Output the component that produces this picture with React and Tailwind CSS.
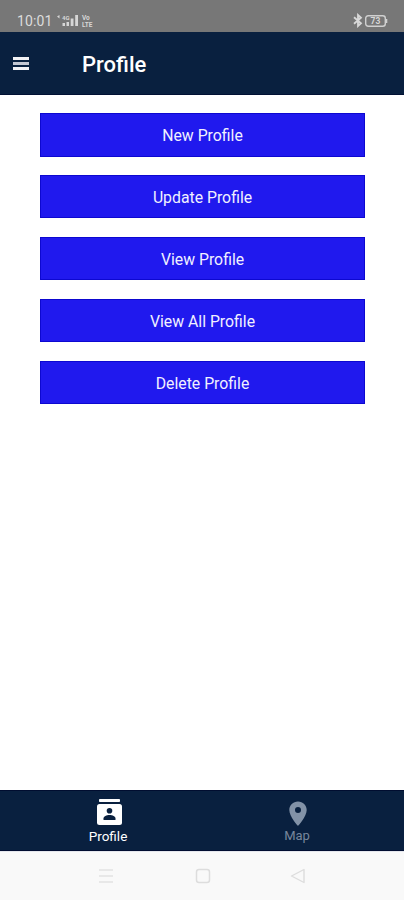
const actions = [
  "New Profile",
  "Update Profile",
  "View Profile",
  "View All Profile",
  "Delete Profile",
];

function SignalIcons() {
  return (
    <svg
      width="41"
      height="14"
      viewBox="0 0 41 14"
      className="ml-[4px]"
      fill="#d6d6d6"
      fontFamily="Roboto, sans-serif"
      fontWeight="700"
    >
      <path d="M0 2.5 2.500 1v3.500z" />
      <text x="5" y="5.500" fontSize="6">4G</text>
      <rect x="5.500" y="9" width="2.500" height="3" />
      <rect x="9.500" y="8" width="2.500" height="4" />
      <rect x="13.700" y="4.500" width="2.800" height="7.500" />
      <rect x="18.200" y="1" width="2.800" height="11" />
      <text x="25" y="6" fontSize="6.500">Vo</text>
      <text x="25" y="13" fontSize="6.500">LTE</text>
    </svg>
  );
}

function StatusBar() {
  return (
    <div className="flex h-8 items-start bg-[#777777] pl-[17px] pr-4 text-[#dcdcdc]">
      <span className="mt-[11px] w-[36px] whitespace-nowrap text-[14px] leading-[20px] tracking-[0.1px]">10:01</span>
      <div className="mt-[14px]">
        <SignalIcons />
      </div>
      <div className="ml-auto mt-[13px] flex items-center gap-[2px]">
        <svg width="10" height="15" viewBox="0 0 10 15" fill="none" stroke="#d8d8d8" strokeWidth="1.800">
          <path d="M1 4.200 8 10.200 5 13V2L8 4.800 1 10.800" />
        </svg>
        <svg width="23" height="12" viewBox="0 0 23 12" fontFamily="Roboto, sans-serif">
          <rect x=".7" y=".7" width="19.600" height="10.600" rx="2.500" fill="none" stroke="#d0d0d0" strokeWidth="1.400" />
          <path d="M21.500 4v4" stroke="#d0d0d0" strokeWidth="1.600" />
          <text x="10.500" y="9" fontSize="8.500" fontWeight="700" fill="#d6d6d6" textAnchor="middle">73</text>
        </svg>
      </div>
    </div>
  );
}

function Header() {
  return (
    <header className="flex h-[63px] items-center border-b border-[#001033] bg-[#09203f] pl-[13px] text-white">
      <button aria-label="Menu" className="flex w-4 flex-col gap-[2px]">
        <span className="h-[3px] w-full bg-[#f2f2f5]" />
        <span className="h-[3px] w-full bg-[#c3c7d2]" />
        <span className="h-[3px] w-full bg-[#f2f2f5]" />
      </button>
      <h1 className="ml-[53px] mt-[3px] text-[22px] font-medium leading-7">Profile</h1>
    </header>
  );
}

function BottomNav() {
  return (
    <nav className="grid h-[61px] grid-cols-[216px_1fr] border-y border-[#000d30] bg-[#09203f] text-[13px] leading-4">
      <div className="flex flex-col items-center pt-[7px] text-white">
        <svg width="26" height="28" viewBox="0 0 26 28" className="ml-[3px]">
          <rect x="2" y="1" width="21" height="3" rx=".8" fill="#fff" />
          <rect x="0" y="6" width="25" height="21" rx="2.500" fill="#fff" />
          <circle cx="12.500" cy="12.700" r="2.800" fill="#09203f" />
          <path d="M6.500 22v-1.400c0-2.200 3-3.600 6-3.600s6 1.400 6 3.600V22z" fill="#09203f" />
        </svg>
        <span className="mt-[2px] text-[13.500px]">Profile</span>
      </div>
      <div className="flex flex-col items-center pr-[26px] pt-[7px] text-[#77869b]">
        <svg width="18" height="28" viewBox="0 0 18 28" className="ml-[2px]">
          <path
            fill="#8292a7"
            fillRule="evenodd"
            d="M9 3.500c-4.900 0-8.700 3.800-8.700 8.500C.3 18.500 9 28 9 28s8.700-9.500 8.700-16C17.700 7.300 13.900 3.500 9 3.500zm0 5.500a3 3 0 1 1 0 6 3 3 0 0 1 0-6z"
          />
        </svg>
        <span className="mt-[2px]">Map</span>
      </div>
    </nav>
  );
}

function SystemNav() {
  return (
    <div className="flex h-[49px] items-start border-t border-[#e5e7ed] bg-[#f9f9f9] pl-[98px] pt-[16px]">
      <svg width="16" height="16" viewBox="0 0 16 16" stroke="#e2e2e2" strokeWidth="1.600">
        <path d="M1 2h14M1 8h14M1 14h14" />
      </svg>
      <svg width="16" height="16" viewBox="0 0 16 16" className="ml-[81px]" fill="none" stroke="#dddddd" strokeWidth="1.500">
        <rect x="1.500" y="1.500" width="13" height="13" rx="2.500" />
      </svg>
      <svg width="16" height="16" viewBox="0 0 16 16" className="ml-[79px]" fill="none" stroke="#dddddd" strokeWidth="1.400" strokeLinejoin="round">
        <path d="M14 1.500v13L1.500 8z" />
      </svg>
    </div>
  );
}

export default function App() {
  return (
    <div className="flex h-[900px] w-[404px] flex-col overflow-hidden bg-white font-['Roboto',sans-serif]">
      <StatusBar />
      <Header />
      <main className="flex flex-1 flex-col gap-[18.400px] pl-10 pr-[39px] pt-[18px]">
        {actions.map((label) => (
          <button
            key={label}
            className="h-[43.500px] shrink-0 border border-[#0d08d0] bg-[#2019ee] pt-[3px] text-[15.800px] leading-5 text-[#f0f0ff]"
          >
            {label}
          </button>
        ))}
      </main>
      <BottomNav />
      <SystemNav />
    </div>
  );
}
